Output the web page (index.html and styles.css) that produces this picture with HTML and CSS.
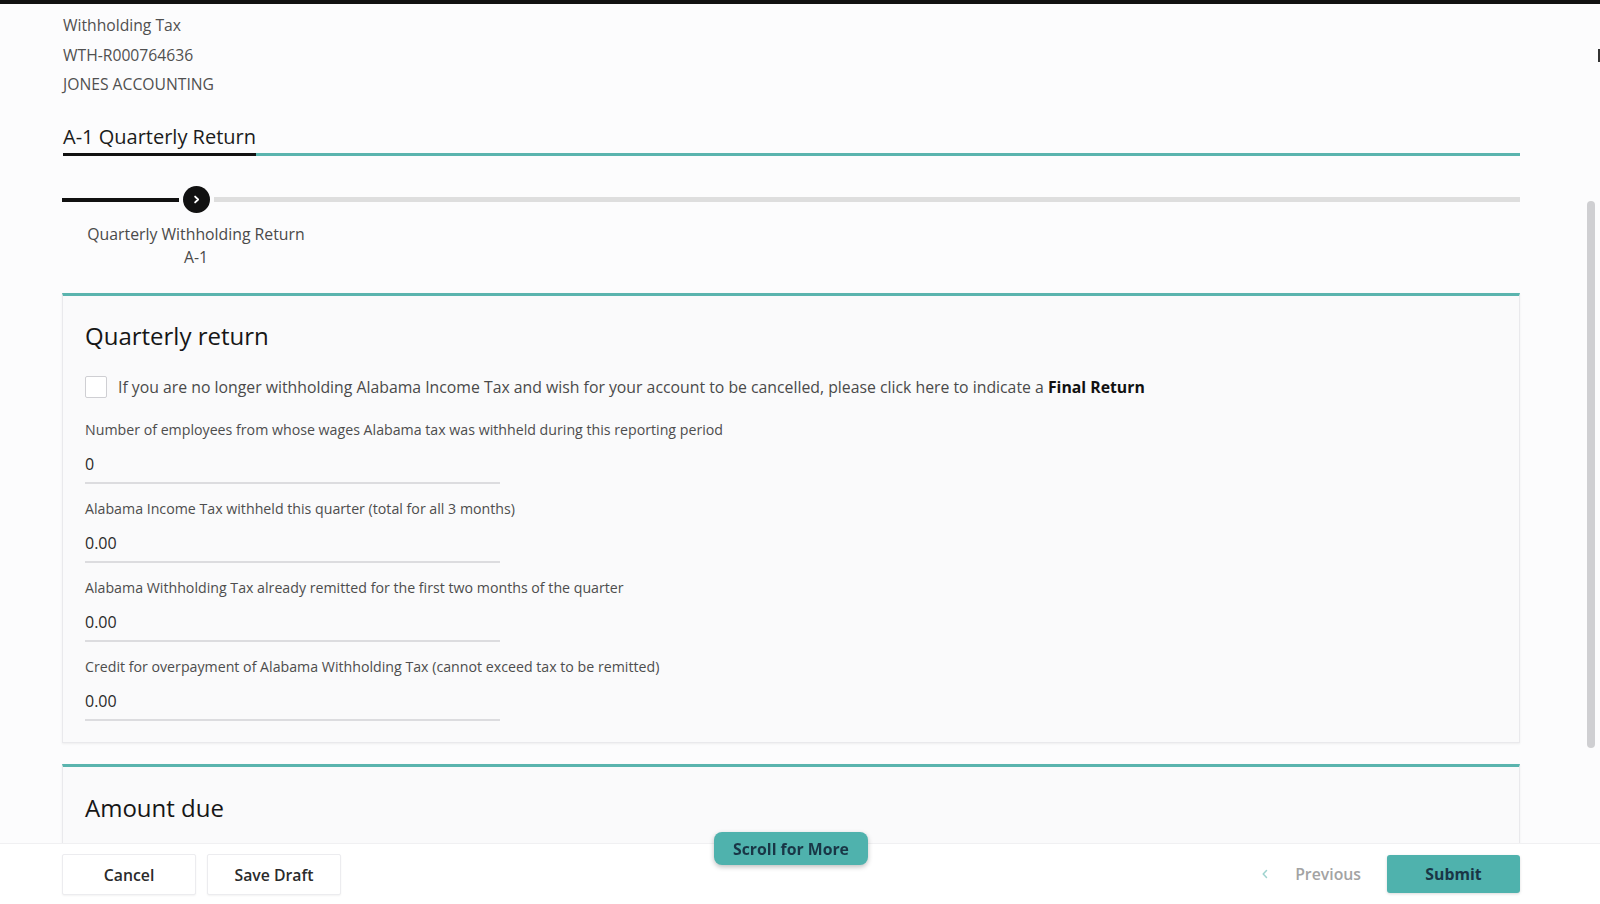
FILE: index.html
```html
<!DOCTYPE html>
<html lang="en">
<head>
<meta charset="utf-8">
<title>A-1 Quarterly Return</title>
<link rel="stylesheet" href="styles.css">
</head>
<body>
<div class="topbar"></div>
<main class="page">
  <div class="account">
    <div class="account-line">Withholding Tax</div>
    <div class="account-line">WTH-R000764636</div>
    <div class="account-line">JONES ACCOUNTING</div>
  </div>

  <nav class="tabs">
    <div class="tab tab-active">A-1 Quarterly Return</div>
  </nav>

  <div class="stepper">
    <div class="step-track">
      <span class="seg seg-done"></span>
      <span class="step-dot">
        <svg width="11" height="11" viewBox="0 0 12 12"><path d="M4.5 2.8 L7.8 6 L4.5 9.2" fill="none" stroke="#fff" stroke-width="2" stroke-linecap="round" stroke-linejoin="round"/></svg>
      </span>
      <span class="seg seg-todo"></span>
    </div>
    <div class="step-label">Quarterly Withholding Return<br>A-1</div>
  </div>

  <section class="card">
    <h2 class="card-title">Quarterly return</h2>
    <label class="check-row">
      <span class="checkbox"></span>
      <span>If you are no longer withholding Alabama Income Tax and wish for your account to be cancelled, please click here to indicate a <b>Final Return</b></span>
    </label>
    <div class="field">
      <div class="field-label">Number of employees from whose wages Alabama tax was withheld during this reporting period</div>
      <div class="field-input">0</div>
    </div>
    <div class="field">
      <div class="field-label">Alabama Income Tax withheld this quarter (total for all 3 months)</div>
      <div class="field-input">0.00</div>
    </div>
    <div class="field">
      <div class="field-label">Alabama Withholding Tax already remitted for the first two months of the quarter</div>
      <div class="field-input">0.00</div>
    </div>
    <div class="field">
      <div class="field-label">Credit for overpayment of Alabama Withholding Tax (cannot exceed tax to be remitted)</div>
      <div class="field-input">0.00</div>
    </div>
  </section>

  <section class="card card-next">
    <h2 class="card-title">Amount due</h2>
  </section>
</main>

<footer class="actions">
  <div class="actions-left">
    <button class="btn">Cancel</button>
    <button class="btn">Save Draft</button>
  </div>
  <div class="actions-right">
    <button class="btn-prev">
      <svg width="10" height="12" viewBox="0 0 10 12"><path d="M6.5 2.5 L3.2 6 L6.5 9.5" fill="none" stroke="#9fd3cf" stroke-width="1.5" stroke-linecap="round" stroke-linejoin="round"/></svg>
      <span>Previous</span>
    </button>
    <button class="btn-submit">Submit</button>
  </div>
  <button class="scroll-more">Scroll for More</button>
</footer>

<div class="scroll-thumb"></div>
<div class="edge-mark"></div>
</body>
</html>
```

FILE: styles.css
```css
* { box-sizing: border-box; }

html, body {
  margin: 0;
  height: 100%;
  overflow: hidden;
  background: #fcfcfd;
  font-family: "Open Sans", "Noto Sans", sans-serif;
  color: #333;
}

.topbar {
  height: 4px;
  background: #111;
}

.page {
  padding: 7px 80px 0 62px;
}

/* account summary */
.account {
  margin-left: 1px;
  color: #505050;
  font-size: 15.7px;
}
.account-line {
  height: 29.5px;
  line-height: 29.5px;
}

/* tabs */
.tabs {
  margin-top: 22px;
  margin-left: 1px;
  border-bottom: 3px solid #5ab4ae;
  display: flex;
}
.tab {
  font-size: 20px;
  color: #1b1b1b;
  line-height: 29px;
  padding-bottom: 2px;
  margin-bottom: -3px;
}
.tab-active {
  border-bottom: 3px solid #111;
}

/* stepper */
.stepper {
  margin-top: 30px;
}
.step-track {
  display: flex;
  align-items: center;
  gap: 4px;
  height: 28px;
}
.seg { display: block; }
.seg-done {
  width: 117px;
  height: 4px;
  background: #111;
}
.seg-todo {
  flex: 1;
  height: 5px;
  background: #dedede;
}
.step-dot {
  width: 27px;
  height: 27px;
  border-radius: 50%;
  background: #111;
  display: flex;
  align-items: center;
  justify-content: center;
}
.step-label {
  width: 268px;
  text-align: center;
  font-size: 15.8px;
  line-height: 23.5px;
  color: #4a4a4a;
  margin-top: 9px;
}

/* cards */
.card {
  margin-top: 23px;
  background: #fafafb;
  border: 1px solid #e9e9ec;
  border-top: 3px solid #5ab4ae;
  box-shadow: 0 1px 2px rgba(0, 0, 0, 0.06);
  padding: 21px 22px 21px;
}
.card-title {
  margin: 0;
  font-size: 24px;
  font-weight: 400;
  color: #161616;
  line-height: 38px;
}

.check-row {
  display: flex;
  align-items: center;
  gap: 11px;
  margin-top: 21px;
  font-size: 15.8px;
  line-height: 22px;
  color: #4a4a4a;
}
.check-row b {
  color: #111;
  font-weight: 700;
}
.checkbox {
  width: 22px;
  height: 22px;
  border: 1px solid #cfcfd3;
  border-radius: 2px;
  background: #fff;
  flex: none;
}

.field {
  margin-top: 22px;
}
.field + .field {
  margin-top: 15px;
}
.field-label {
  font-size: 14.2px;
  color: #4d4d4d;
  line-height: 20px;
}
.field-input {
  width: 415px;
  margin-top: 13px;
  font-size: 16px;
  color: #2a2a2a;
  line-height: 22px;
  padding-bottom: 7px;
  border-bottom: 2px solid #dcdcdf;
}

.card-next {
  margin-top: 21px;
  height: 120px;
  padding-top: 22px;
}

/* footer bar */
.actions {
  position: fixed;
  left: 0;
  right: 0;
  bottom: 0;
  height: 61px;
  background: #fff;
  padding: 10px 80px 0 62px;
  display: flex;
  justify-content: space-between;
  align-items: flex-start;
  border-top: 1px solid #f0f0f2;
}
.actions-left {
  display: flex;
  gap: 11px;
}
.btn {
  font-family: inherit;
  width: 134px;
  height: 41px;
  background: #fff;
  border: 1px solid #ececef;
  border-radius: 2px;
  box-shadow: 0 1px 2px rgba(0, 0, 0, 0.05);
  font-size: 15.8px;
  font-weight: 600;
  color: #2b2b2b;
}
.actions-right {
  display: flex;
  align-items: center;
  gap: 26px;
}
.btn-prev {
  font-family: inherit;
  background: none;
  border: 0;
  display: flex;
  align-items: center;
  gap: 25px;
  font-size: 15.8px;
  font-weight: 600;
  color: #a3a3a3;
  padding: 0;
}
.btn-submit {
  font-family: inherit;
  width: 133px;
  height: 38px;
  margin-top: 1px;
  background: #4fb2ad;
  border: 0;
  border-radius: 3px;
  box-shadow: 0 1px 3px rgba(0, 0, 0, 0.15);
  font-size: 15.8px;
  font-weight: 700;
  color: #193646;
}

.scroll-more {
  position: absolute;
  left: 714px;
  top: -12px;
  width: 154px;
  height: 33px;
  font-family: inherit;
  background: #4fb2ad;
  border: 0;
  border-radius: 8px;
  box-shadow: 0 2px 5px rgba(0, 0, 0, 0.25);
  font-size: 15.8px;
  font-weight: 700;
  color: #193646;
}

/* page scrollbar thumb */
.scroll-thumb {
  position: fixed;
  right: 5px;
  top: 201px;
  width: 8px;
  height: 547px;
  border-radius: 4px;
  background: #cfcfd2;
}
.edge-mark {
  position: fixed;
  right: 0;
  top: 49px;
  width: 2px;
  height: 13px;
  background: #333;
}
```
